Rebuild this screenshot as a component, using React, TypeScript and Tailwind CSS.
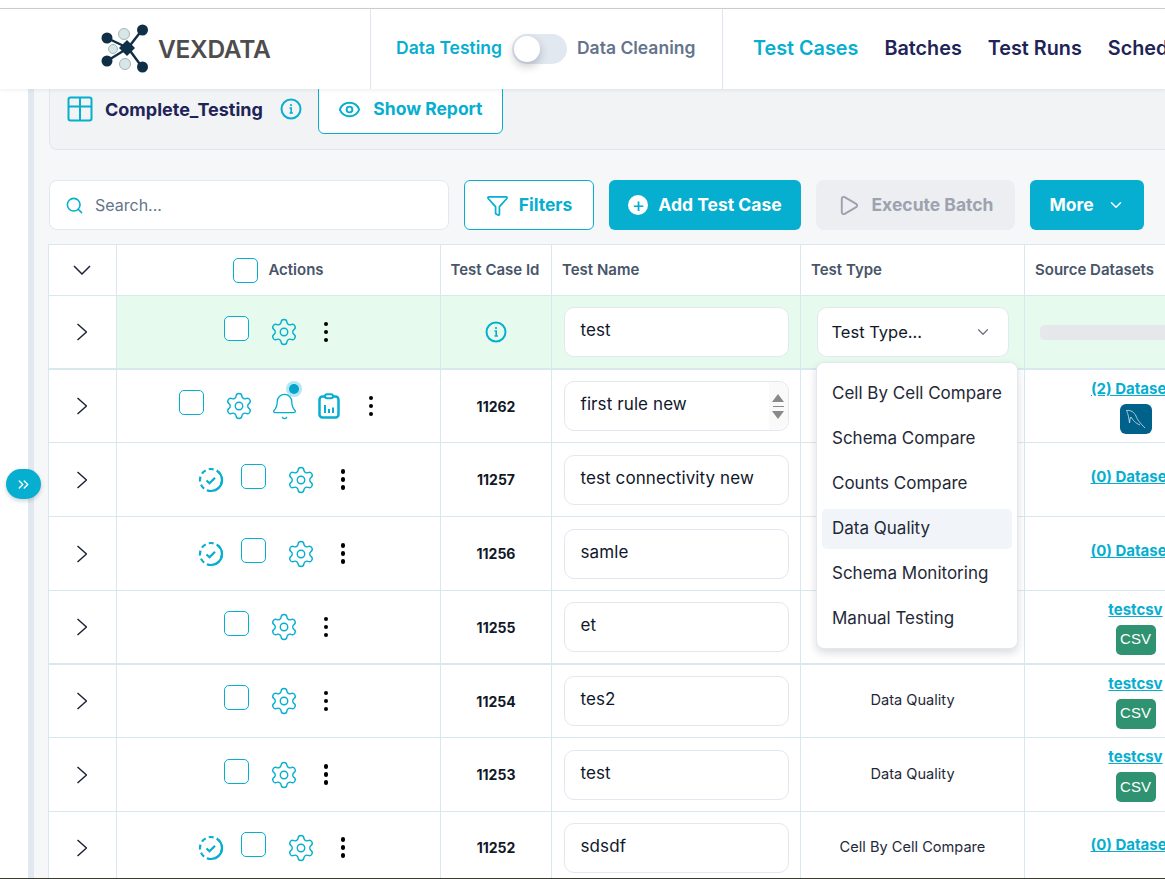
import { Bell, ChevronDown, ChevronsRight, Eye, Funnel, Play, Search, Settings } from "lucide-react";

const teal = "text-[#06aed0]";

type Row = {
  id: string;
  name: string;
  type: string;
  link: string;
  badge?: "mysql" | "csv";
  height: string;
  thick?: boolean;
  done?: boolean;
  bell?: boolean;
  spinner?: boolean;
};

const rows: Row[] = [
  { id: "11262", name: "first rule new", type: "Data Quality", link: "(2) Datasets", badge: "mysql", height: "h-[73px]", bell: true, spinner: true },
  { id: "11257", name: "test connectivity new", type: "Data Quality", link: "(0) Datasets", height: "h-[74px]", done: true },
  { id: "11256", name: "samle", type: "Data Quality", link: "(0) Datasets", height: "h-[74px]", done: true },
  { id: "11255", name: "et", type: "Data Quality", link: "testcsv", badge: "csv", height: "h-[74px]", thick: true },
  { id: "11254", name: "tes2", type: "Data Quality", link: "testcsv", badge: "csv", height: "h-[73px]" },
  { id: "11253", name: "test", type: "Data Quality", link: "testcsv", badge: "csv", height: "h-[74px]" },
  { id: "11252", name: "sdsdf", type: "Cell By Cell Compare", link: "(0) Datasets", height: "h-[72px]", done: true },
];

const options = ["Cell By Cell Compare", "Schema Compare", "Counts Compare", "Data Quality", "Schema Monitoring", "Manual Testing"];

const Logo = () => (
  <svg width="50" height="50" viewBox="100 24 50 50">
    <g stroke="#0f2f47" strokeWidth="2.4">
      <line x1="128" y1="48" x2="142" y2="30" />
      <line x1="128" y1="48" x2="142" y2="67" />
      <line x1="128" y1="48" x2="107" y2="38" />
      <line x1="128" y1="48" x2="107" y2="61" />
    </g>
    <g fill="#0f2f47">
      <circle cx="142.500" cy="30" r="5.500" />
      <circle cx="142.500" cy="67" r="5.500" />
      <circle cx="107" cy="38" r="5.500" />
      <circle cx="107" cy="61" r="5.500" />
      <path d="M127 40l8 8-8 8-8-8z" />
    </g>
    <g fill="#d7e6e6" stroke="#a3b6ba" strokeWidth="1">
      <circle cx="124" cy="34" r="5.500" />
      <circle cx="113" cy="49" r="4.500" />
      <circle cx="125" cy="64" r="5.500" />
    </g>
  </svg>
);

const InfoIcon = () => (
  <svg width="22" height="22" viewBox="0 0 22 22" fill="none" stroke="#06aed0" strokeWidth="2">
    <circle cx="11" cy="11" r="9.500" />
    <path d="M9.500 10h1.700v5M9.500 15h3.400" strokeWidth="1.600" />
    <circle cx="11" cy="7" r="1.100" fill="#06aed0" stroke="none" />
  </svg>
);

const TableIcon = () => (
  <svg width="26" height="26" viewBox="0 0 26 26" fill="none" stroke="#06aed0" strokeWidth="2">
    <rect x="1.500" y="1.500" width="23" height="23" rx="2" />
    <path d="M1.500 10.500h23M13 1.500v23" />
  </svg>
);

const ExpandArrow = () => (
  <svg width="10" height="18" viewBox="0 0 10 18" fill="none" stroke="#1c2238" strokeWidth="1.500" className="mr-[1px]">
    <path d="M.5 1l9 8-9 8" />
  </svg>
);

const Checkbox = ({ lifted = true }: { lifted?: boolean }) => (
  <div className={`w-[25px] h-[25px] rounded-[5px] border border-[#06aed0] bg-white shrink-0 ${lifted ? "mb-[7px]" : ""}`} />
);

const DoneIcon = () => (
  <svg width="26" height="26" viewBox="0 0 26 26" fill="none" stroke="#06aed0" strokeWidth="2.200" className="shrink-0 mr-[17px]">
    <circle cx="13" cy="13" r="11" strokeDasharray="5 3.200" />
    <path d="M13 24a11 11 0 0 0 11-11 11 11 0 0 0-4-8.500" />
    <path d="M8.500 13.500l3 2.800 5.500-5.500" strokeWidth="2.200" />
  </svg>
);

const ClipboardIcon = () => (
  <svg width="26" height="26" viewBox="0 0 26 26" fill="none" stroke="#06aed0" strokeWidth="2.500" className="shrink-0">
    <rect x="3.500" y="3.500" width="19" height="21" rx="3" />
    <rect x="9" y="1.200" width="8" height="4" rx="2" fill="white" strokeWidth="2" />
    <path d="M9 12v8M13 16v4M17 14.500v5.500" strokeWidth="2" />
  </svg>
);

const Dots = () => (
  <div className="w-[14px] flex flex-col items-center gap-[3.500px] shrink-0">
    <span className="w-[4.500px] h-[4.500px] rounded-full bg-black" />
    <span className="w-[4.500px] h-[4.500px] rounded-full bg-black" />
    <span className="w-[4.500px] h-[4.500px] rounded-full bg-black" />
  </div>
);

const Gear = () => <Settings size={30} strokeWidth={1.1} className={`${teal} -m-[2px] shrink-0`} />;

const MysqlTile = () => (
  <div className="w-[32px] h-[30px] rounded-[6px] bg-[#00618a] flex items-center justify-center">
    <svg width="32" height="30" viewBox="0 0 32 30" fill="none" stroke="#d5e6ee" strokeWidth="0.800">
      <path d="M6.500 6.500C11 6 14 8 16 12c1.500 4 4 7 9 12" />
      <path d="M6.500 6.500c1 2.500 2 4.500 3 12.500.5-3 .5-5 1.500-6 2 3 4 6 9 8" />
    </svg>
  </div>
);

const CsvTile = () => (
  <div className="w-[40px] h-[30px] rounded-[5px] bg-[#2f9270] flex items-center justify-center text-white text-[15px] font-['Liberation_Sans',sans-serif]">
    CSV
  </div>
);

const NameBox = ({ value, spinner }: { value: string; spinner?: boolean }) => (
  <div className="relative w-[225px] h-[50px] rounded-[10px] border border-[#e2e8f0] bg-white pl-[16px] pb-[2px] flex items-center text-[17px] tracking-[0.1px] text-[#0f172a]">
    {value}
    {spinner && (
      <div className="absolute right-0 top-0 h-full w-[19px] rounded-r-[10px] bg-[#fafafa] flex flex-col items-center justify-center gap-[4px]">
        <span className="w-0 h-0 border-x-[6px] border-x-transparent border-b-[8px] border-b-[#8a8a8a]" />
        <span className="w-[11px] h-[1px] bg-[#8a8a8a]" />
        <span className="w-0 h-0 border-x-[6px] border-x-transparent border-t-[8px] border-t-[#8a8a8a]" />
      </div>
    )}
  </div>
);

const grid = "grid grid-cols-[68px_324px_111px_249px_224px_222px]";
const cell = "border-r border-[#d9e8ee] flex items-center justify-center";

export default function App() {
  return (
    <div className="relative h-[879px] w-full overflow-hidden bg-white flex flex-col border-b border-[#3a3a30] font-['Inter',sans-serif]">
      <div className="h-[9px] shrink-0 border-b border-[#cfcfcf]" />

      <header className="relative z-10 h-[80px] shrink-0 bg-white flex shadow-[0_1px_4px_rgba(15,23,42,0.08)]">
        <div className="w-[371px] shrink-0 border-r border-[#dfe6ee] pl-[100px] flex items-center gap-[8px]">
          <Logo />
          <span className="text-[24.500px] font-semibold text-[#4d4d4d] tracking-[-0.3px]">VEXDATA</span>
        </div>
        <div className="w-[352px] shrink-0 border-r border-[#dfe6ee] pl-[25px] flex items-center text-[17.500px] font-semibold">
          <span className={`${teal} mb-[2px]`}>Data Testing</span>
          <div className="ml-[10px] w-[55px] h-[30px] rounded-full bg-[#e2e8f0] flex items-center pl-[2px]">
            <div className="w-[26px] h-[26px] rounded-full bg-white shadow-[0_4px_10px_rgba(15,23,42,0.25)]" />
          </div>
          <span className="ml-[10px] mb-[2px] text-[#64748b]">Data Cleaning</span>
        </div>
        <nav className="pl-[30px] flex items-center gap-[26px] text-[19.800px] font-semibold text-[#1e2457] whitespace-nowrap">
          <span className={teal}>Test Cases</span>
          <span>Batches</span>
          <span>Test Runs</span>
          <span>Schedules</span>
        </nav>
      </header>

      <div className="flex-1 min-h-0 flex overflow-hidden">
        <div className="w-[28px] shrink-0 bg-white" />
        <div className="w-[6px] shrink-0 bg-[#e2e8f0]" />
        <main className="flex-1 min-w-0 bg-[#f6f7f9] pl-[14px] overflow-hidden">
          <section className="-mt-[5px] ml-[1px] h-[66px] w-[1200px] bg-[#f1f3f5] border-l border-b border-[#e2e6ec] rounded-bl-[8px] pl-[17px]">
            <div className="h-[50px] flex items-center">
              <TableIcon />
              <span className="ml-[12px] mt-[1px] text-[18px] font-bold text-[#1e2457]">Complete_Testing</span>
              <span className="ml-[17px] flex"><InfoIcon /></span>
              <button className={`ml-[16px] w-[185px] h-[50px] rounded-[6px] border border-[#06aed0] bg-white flex items-center justify-center gap-[12px] text-[17.500px] font-bold ${teal}`}>
                <Eye size={23} strokeWidth={2} />
                Show Report
              </button>
            </div>
          </section>

          <div className="mt-[30px] ml-[1px] h-[50px] flex gap-[15px] text-[17.500px] font-bold whitespace-nowrap">
            <div className="w-[400px] rounded-[8px] border border-[#e2e8f0] bg-white flex items-center pl-[15px] gap-[11px] text-[16px] font-normal text-[#64748b]">
              <Search size={19} strokeWidth={2} className={teal} />
              Search...
            </div>
            <button className={`w-[130px] rounded-[6px] border border-[#06aed0] bg-white flex items-center justify-center gap-[10px] ${teal}`}>
              <Funnel size={23} strokeWidth={1.8} />
              Filters
            </button>
            <button className="w-[192px] rounded-[6px] bg-[#06aed0] text-white flex items-center justify-center gap-[10px]">
              <span className="w-[20px] h-[20px] rounded-full bg-white flex items-center justify-center text-[#06aed0] text-[20px] font-normal leading-none">+</span>
              Add Test Case
            </button>
            <button className="w-[199px] rounded-[8px] bg-[#eceef2] text-[#9ca3af] flex items-center justify-center gap-[11px]">
              <Play size={23} strokeWidth={2} />
              Execute Batch
            </button>
            <button className="w-[114px] rounded-[6px] bg-[#06aed0] text-white flex items-center justify-center gap-[13px]">
              More
              <ChevronDown size={18} strokeWidth={2} />
            </button>
          </div>

          <div className="relative mt-[14px] w-[1300px] border-l border-t border-[#d9e8ee] bg-white">
            <div className={`${grid} h-[51px] border-b border-[#d9e8ee] text-[15px] font-semibold text-[#475569]`}>
              <div className={cell}>
                <svg width="18" height="10" viewBox="0 0 18 10" fill="none" stroke="#1c2238" strokeWidth="1.500" className="mr-[1px]">
                  <path d="M1 1l8 8 8-8" />
                </svg>
              </div>
              <div className={`${cell} gap-[10px]`}>
                <Checkbox lifted={false} />
                Actions
              </div>
              <div className={`${cell} whitespace-nowrap pr-[2px]`}>Test Case Id</div>
              <div className={`${cell} !justify-start pl-[10px]`}>Test Name</div>
              <div className={`${cell} !justify-start pl-[10px]`}>Test Type</div>
              <div className={`${cell} !justify-start pl-[10px]`}>Source Datasets</div>
            </div>

            <div className={`${grid} h-[74px] border-b-2 border-[#d9e8ee]`}>
              <div className={cell}><ExpandArrow /></div>
              <div className={`${cell} bg-[#e6faee]`}>
                <Checkbox />
                <span className="ml-[22px] flex"><Gear /></span>
                <span className="ml-[22px] flex"><Dots /></span>
              </div>
              <div className={`${cell} bg-[#e6faee]`}><InfoIcon /></div>
              <div className={`${cell} bg-[#e6faee]`}><NameBox value="test" /></div>
              <div className={`${cell} bg-[#e6faee]`}>
                <div className="w-[192px] h-[50px] rounded-[10px] border border-[#e2e8f0] bg-white pl-[14px] pr-[16px] flex items-center justify-between text-[16.500px] text-[#0f172a]">
                  Test Type...
                  <ChevronDown size={18} strokeWidth={1.600} className="text-[#6b7280]" />
                </div>
              </div>
              <div className={`${cell} bg-[#e6faee] !justify-start pl-[15px]`}>
                <div className="w-[194px] h-[15px] rounded-[5px] bg-[#e5e7eb]" />
              </div>
            </div>

            {rows.map((r) => (
              <div key={r.id} className={`${grid} ${r.height} ${r.thick ? "border-b-2" : "border-b"} border-[#d9e8ee]`}>
                <div className={cell}><ExpandArrow /></div>
                <div className={`${cell} ${r.done ? "pr-[9px]" : ""}`}>
                  {r.done && <DoneIcon />}
                  <Checkbox />
                  <span className="ml-[22px] flex"><Gear /></span>
                  {r.bell && (
                    <>
                      <span className="relative ml-[19px] flex">
                        <Bell size={29} strokeWidth={1.1} className={`${teal} -m-[1.500px]`} />
                        <span className="absolute -top-[12px] left-[15px] w-[16px] h-[16px] rounded-full bg-[#06aed0]/30 flex items-center justify-center">
                          <span className="w-[10px] h-[10px] rounded-full bg-[#06a3cc]" />
                        </span>
                      </span>
                      <span className="ml-[19px] flex"><ClipboardIcon /></span>
                    </>
                  )}
                  <span className="ml-[22px] flex"><Dots /></span>
                </div>
                <div className={`${cell} text-[14px] font-bold text-[#111827]`}>{r.id}</div>
                <div className={cell}><NameBox value={r.name} spinner={r.spinner} /></div>
                <div className={`${cell} text-[14.600px] text-[#1f2937]`}>{r.type}</div>
                <div className={`${cell} flex-col gap-[5px] ${r.badge ? "" : "pb-[5px]"}`}>
                  <span className={`text-[15px] leading-[20px] font-bold underline ${teal}`}>{r.link}</span>
                  {r.badge === "mysql" && <MysqlTile />}
                  {r.badge === "csv" && <CsvTile />}
                </div>
              </div>
            ))}

            <div className="absolute z-20 left-[767px] top-[117px] w-[202px] rounded-[8px] border border-[#e2e8f0] bg-white px-[5px] pt-[11px] pb-[9px] flex flex-col gap-[5px] shadow-[0_4px_8px_rgba(15,23,42,0.15)]">
              {options.map((o) => (
                <div key={o} className={`h-[40px] rounded-[5px] pl-[10px] flex items-center text-[17px] text-[#1f2937] whitespace-nowrap ${o === "Data Quality" ? "bg-[#f1f4f9]" : ""}`}>
                  {o}
                </div>
              ))}
            </div>
          </div>
        </main>
      </div>

      <button className="absolute z-20 left-[6px] top-[469px] w-[35px] h-[30px] rounded-full bg-[#06aed0] text-white flex items-center justify-center shadow-[0_2px_4px_rgba(15,23,42,0.2)]">
        <ChevronsRight size={17} strokeWidth={2} />
      </button>
    </div>
  );
}
